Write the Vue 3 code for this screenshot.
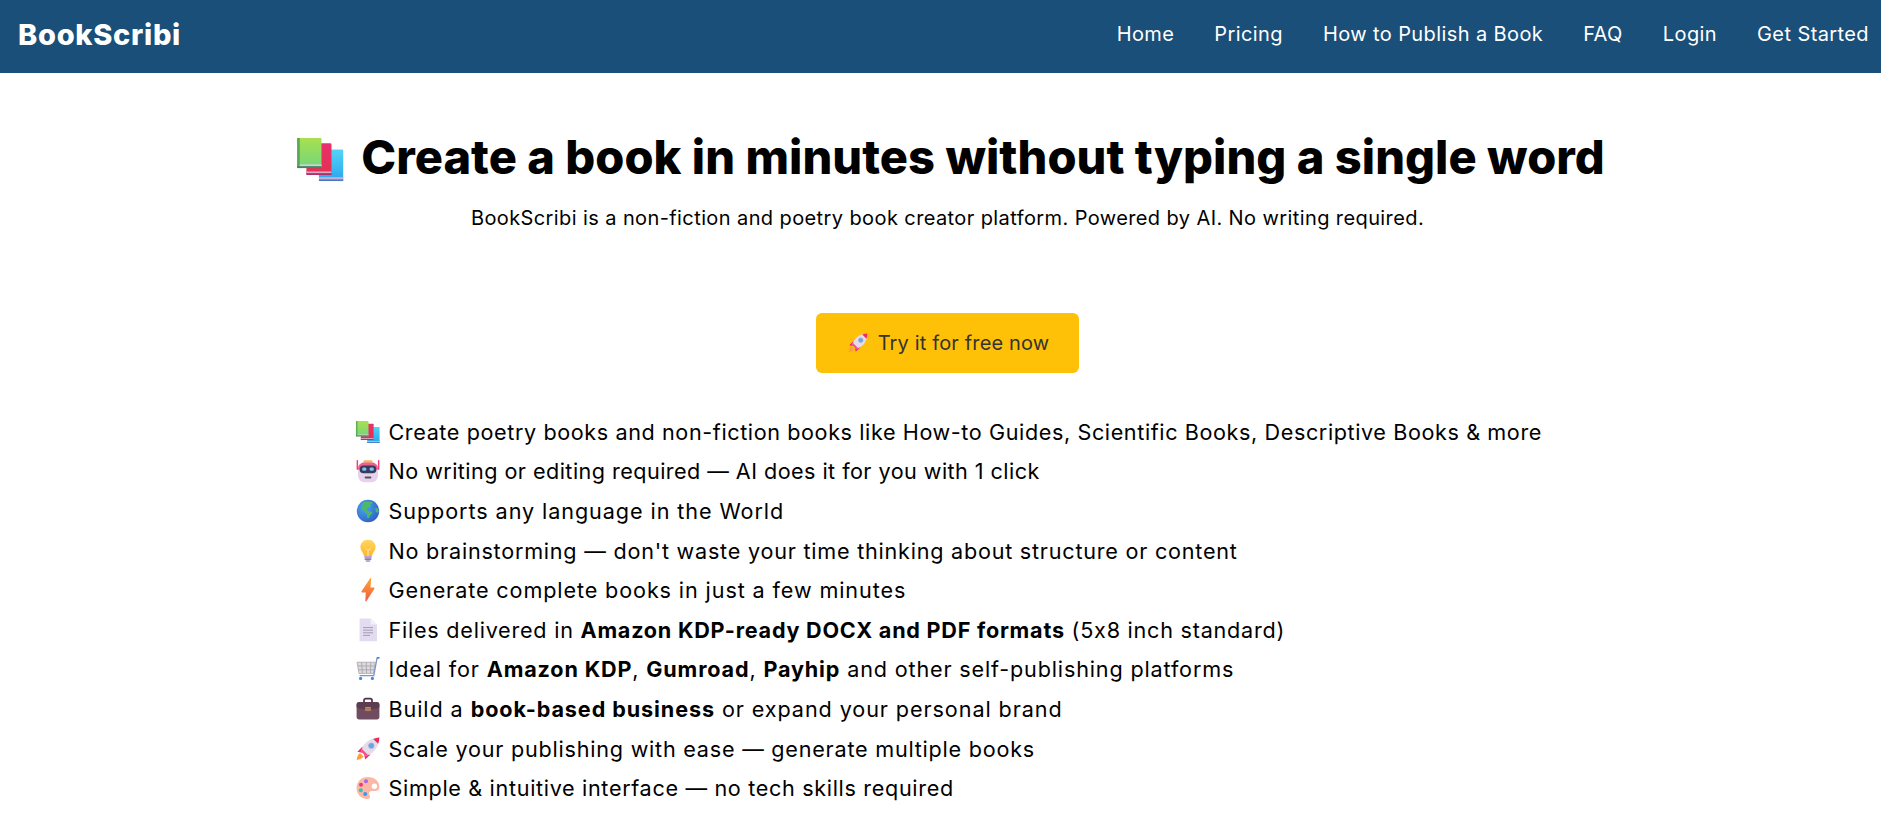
<script setup>
const links = ['Home', 'Pricing', 'How to Publish a Book', 'FAQ', 'Login', 'Get Started']
const rows = [
  { icon: 'books', ls: 0.6, parts: [['Create poetry books and non-fiction books like How-to Guides, Scientific Books, Descriptive Books & more', 0]] },
  { icon: 'robot', ls: 0.45, parts: [['No writing or editing required — AI does it for you with 1 click', 0]] },
  { icon: 'globe', ls: 0.92, parts: [['Supports any language in the World', 0]] },
  { icon: 'bulb', ls: 0.77, parts: [["No brainstorming — don't waste your time thinking about structure or content", 0]] },
  { icon: 'bolt', ls: 0.89, parts: [['Generate complete books in just a few minutes', 0]] },
  { icon: 'page', ls: 0.76, parts: [['Files delivered in ', 0], ['Amazon KDP-ready DOCX and PDF formats', 1], [' (5x8 inch standard)', 0]] },
  { icon: 'cart', ls: 0.84, parts: [['Ideal for ', 0], ['Amazon KDP', 1], [', ', 0], ['Gumroad', 1], [', ', 0], ['Payhip', 1], [' and other self-publishing platforms', 0]] },
  { icon: 'case', ls: 0.91, parts: [['Build a ', 0], ['book-based business', 1], [' or expand your personal brand', 0]] },
  { icon: 'rocket', ls: 0.77, parts: [['Scale your publishing with ease — generate multiple books', 0]] },
  { icon: 'palette', ls: 0.67, parts: [['Simple & intuitive interface — no tech skills required', 0]] }
]
</script>

<template>
  <div class="page">
    <svg class="defs" aria-hidden="true">
      <defs>
        <linearGradient id="gGreen" x1="0" y1="0" x2="0" y2="1"><stop offset="0" stop-color="#a8e04f"/><stop offset="1" stop-color="#74d67c"/></linearGradient>
        <linearGradient id="gRed" x1="0" y1="0" x2="0" y2="1"><stop offset="0" stop-color="#e8306e"/><stop offset="1" stop-color="#e6304f"/></linearGradient>
        <linearGradient id="gBlue" x1="0" y1="0" x2="0" y2="1"><stop offset="0" stop-color="#55d4f6"/><stop offset="1" stop-color="#2aa5ee"/></linearGradient>
        <linearGradient id="gBulb" x1="0" y1="0" x2="0" y2="1"><stop offset="0" stop-color="#ffd75e"/><stop offset="1" stop-color="#ffb52e"/></linearGradient>
        <linearGradient id="gBolt" x1="0" y1="0" x2="0" y2="1"><stop offset="0" stop-color="#ffa62e"/><stop offset="1" stop-color="#ee5a4a"/></linearGradient>
        <radialGradient id="gGlobe" cx=".35" cy=".35" r=".75"><stop offset="0" stop-color="#4aa8ef"/><stop offset="1" stop-color="#2c5fc0"/></radialGradient>
        <symbol id="books" viewBox="0 0 24 24">
          <rect x="11.200" y="6.900" width="12.400" height="16" rx=".6" fill="url(#gBlue)"/>
          <rect x="11.200" y="21" width="12.400" height="1.400" fill="#c4aedb"/>
          <rect x="11.200" y="22.200" width="12.400" height=".8" fill="#4b76c0"/>
          <rect x="4.800" y="3.700" width="12.800" height="16" rx=".6" fill="url(#gRed)"/>
          <rect x="4.800" y="18.100" width="12.800" height="1.100" fill="#d9a9c8"/>
          <rect x="4.800" y="19" width="12.800" height=".9" fill="#b02d68"/>
          <rect x=".1" y="1" width="12.400" height="15.200" rx=".7" fill="url(#gGreen)"/>
          <rect x=".1" y="1" width="1.300" height="15.200" fill="#56a84f"/>
          <rect x="1.400" y="14.500" width="11.100" height="1.100" fill="#d5cfdc"/>
          <rect x=".1" y="15.400" width="12.400" height="1" fill="#44806a"/>
        </symbol>
        <symbol id="robot" viewBox="0 0 24 24">
          <rect x=".6" y="1" width="1.500" height="10" rx=".7" fill="#f0447a"/>
          <rect x="21.900" y="1" width="1.500" height="10" rx=".7" fill="#f0447a"/>
          <rect x="7.500" y="1.200" width="9" height="3" rx="1.200" fill="#f2b84c"/>
          <rect x="2" y="3.600" width="20" height="19.600" rx="6.500" fill="#e6d2ea"/>
          <path d="M2 9.500C2 6 5 3.600 8 3.600h8c3 0 6 2.400 6 5.900v1H2z" fill="#f0608c"/>
          <rect x="3.600" y="6.600" width="16.800" height="7.600" rx="3.800" fill="#383a58"/>
          <rect x="6.200" y="8.600" width="4.200" height="3.200" rx="1.400" fill="#7ec0f8"/>
          <rect x="13.600" y="8.600" width="4.200" height="3.200" rx="1.400" fill="#7ec0f8"/>
          <rect x="8.600" y="17.400" width="6.800" height="2" rx=".8" fill="#5a4d68"/>
        </symbol>
        <symbol id="globe" viewBox="0 0 24 24">
          <circle cx="12" cy="12" r="11.200" fill="url(#gGlobe)"/>
          <path d="M7 3.400c2.600-1.200 7-1.400 9.800-.2l-.6 1.400-2 .6.8 1.600-1.400 1.800-2.400.4-.6 2 1.200 1.200 2.800.2 1.800 1-1.200 2.200-1.400 1-.2 1.600-1.600 1-1-1 .2-2.600-1.600-1.200-.4-2.200-2.400-1-1.200-2.600.8-1.400z" fill="#4eb86a"/>
          <path d="M19.400 8.800l2.600.8.8 3-1.400 1.400-1.800-1.400z" fill="#4eb86a"/>
        </symbol>
        <symbol id="bulb" viewBox="0 0 24 24">
          <path d="M12 .8c-4.600 0-7.600 3.300-7.600 7.300 0 3.800 2.900 5.400 3.600 9h8c.7-3.600 3.600-5.200 3.600-9 0-4-3-7.300-7.600-7.300z" fill="url(#gBulb)"/>
          <path d="M9.400 9.600l2.600 2 2.600-2M12 11.600v5.400" fill="none" stroke="#fff1c4" stroke-width=".9"/>
          <rect x="8.200" y="17" width="7.600" height="2.200" rx=".8" fill="#b7a1d0"/>
          <rect x="8.600" y="19.200" width="6.800" height="2" rx=".8" fill="#8e7cad"/>
          <rect x="9.800" y="21.200" width="4.400" height="1.800" rx=".9" fill="#b7a1d0"/>
        </symbol>
        <symbol id="bolt" viewBox="0 0 24 24">
          <path d="M14 .6 5.600 13.200c-.4.600 0 1.300.7 1.300h3.400L9.400 22.800c-.1.600.6.900 1 .4l8-12.400c.4-.6 0-1.300-.7-1.300h-3.200l.6-8.600c.1-.7-.8-1.200-1.100-.3z" fill="url(#gBolt)"/>
        </symbol>
        <symbol id="page" viewBox="0 0 24 24">
          <path d="M3.600 .4h11L21 6.600v16.600H3.600z" fill="#e3dbf0"/>
          <path d="M14.600.4 21 6.600h-6.400z" fill="#f4f0f8"/>
          <path d="M7 9.600h10M7 12.200h10M7 14.800h10M7 17.400h7" stroke="#a59cb5" stroke-width="1" fill="none"/>
        </symbol>
        <symbol id="cart" viewBox="0 0 24 24">
          <path d="M1 5.200h18.200l-1.600 11.200H3z" fill="#dcd9df" stroke="#a9a7ad" stroke-width=".8"/>
          <path d="M5.600 5.200l.8 11.200M10.200 5.200l.4 11.200M14.800 5.200l-.4 11.200M1.600 9h17M2.200 12.800h15.800" stroke="#a9a7ad" stroke-width=".9" fill="none"/>
          <path d="M23 .8l-2 .3-3.200 17.600H3.600" fill="none" stroke="#7d93c9" stroke-width="1.300"/>
          <path d="M21 .9l2.600-.4" stroke="#3f8ae0" stroke-width="1.600"/>
          <circle cx="4.600" cy="21.400" r="1.600" fill="#3f8ae0"/>
          <circle cx="16.400" cy="21.400" r="1.600" fill="#3f8ae0"/>
        </symbol>
        <symbol id="case" viewBox="0 0 24 24">
          <path d="M8 6V3.400C8 2.400 8.800 1.700 9.800 1.700h4.400c1 0 1.800.7 1.800 1.700V6" fill="none" stroke="#4b3346" stroke-width="1.700"/>
          <rect x=".6" y="5" width="22.800" height="17.400" rx="2.600" fill="#704c60"/>
          <path d="M.6 7.600C.6 6.200 1.800 5 3.200 5h17.600c1.400 0 2.600 1.200 2.600 2.600v2.600C18 13 6 13 .6 10.200z" fill="#5d3d50"/>
          <rect x="9" y="10" width="6" height="3.800" rx=".6" fill="#c98a60"/>
          <path d="M9 11.800h6" stroke="#8d5a48" stroke-width=".7"/>
        </symbol>
        <symbol id="rocket" viewBox="0 0 24 24">
          <path d="M4 16c-1.800 1.300-3 3.800-3.400 7 3.200-.3 5.700-1.600 7-3.400z" fill="#ff9c3c"/>
          <path d="M6.500 9.500 1.400 14.800l5.800 1.200z" fill="#ef2e72"/>
          <path d="M14.500 17.500l-5.300 5.100-1.200-5.800z" fill="#ef2e72"/>
          <path d="M23.400.6C17 .8 10.500 3.600 7.400 9L4.800 14.200l5 5 5.200-2.600C20.400 13.500 23.200 7 23.400.6z" fill="#e6dbe8"/>
          <path d="M17.200 1.900c2-.8 4.100-1.200 6.200-1.300-.1 2.100-.5 4.200-1.300 6.200z" fill="#f0285e"/>
          <path d="M6 12l6 6-2.200 1.200-5-5z" fill="#f0508c"/>
          <circle cx="15.300" cy="8.700" r="2.700" fill="#5fa8f0" stroke="#a9a3c4" stroke-width=".8"/>
        </symbol>
        <symbol id="palette" viewBox="0 0 24 24">
          <path d="M12 1C5.400 1 .6 5.600.6 12s4.800 11 10.800 11c1.600 0 2.600-1 2.600-2.300 0-1.500-1-2-1-3.300 0-1.400 1.200-2.300 2.800-2.300h3.400c2.400 0 4.200-1.400 4.200-4C23.400 5 18.200 1 12 1z" fill="#fbb8a4"/>
          <circle cx="18.400" cy="10.200" r="2.700" fill="#fff"/>
          <circle cx="10" cy="5.200" r="2" fill="#a965e8"/>
          <circle cx="5" cy="8.800" r="2" fill="#f0387e"/>
          <circle cx="4.800" cy="14.200" r="2" fill="#36c4b4"/>
          <circle cx="9.200" cy="18" r="2" fill="#4a90ee"/>
        </symbol>
      </defs>
    </svg>

    <header class="topbar">
      <span class="logo">BookScribi</span>
      <nav class="nav">
        <a v-for="l in links" :key="l" class="nav-link">{{ l }}</a>
      </nav>
    </header>

    <main class="main">
      <h1 class="title">
        <svg class="title-icon"><use href="#books"/></svg>
        <span>Create a book in minutes without typing a single word</span>
      </h1>
      <p class="sub">BookScribi is a non-fiction and poetry book creator platform. Powered by AI. No writing required.</p>
      <a class="cta">
        <svg class="cta-icon"><use href="#rocket"/></svg>
        <span>Try it for free now</span>
      </a>
      <ul class="list">
        <li v-for="r in rows" :key="r.icon" class="row" :style="{ letterSpacing: r.ls + 'px' }">
          <svg class="row-icon"><use :href="'#' + r.icon"/></svg>
          <span class="row-text"><template v-for="(p, i) in r.parts" :key="i"><b v-if="p[1]">{{ p[0] }}</b><template v-else>{{ p[0] }}</template></template></span>
        </li>
      </ul>
    </main>
  </div>
</template>

<style scoped>
.page {
  font-family: Inter, "Noto Sans", sans-serif;
  font-feature-settings: "calt" 0;
  color: #000;
  background: #fff;
  min-height: 835px;
  overflow: hidden;
}
.defs { position: absolute; width: 0; height: 0; }
.topbar {
  height: 73px;
  background: #1a4f79;
  display: flex;
  align-items: center;
  justify-content: space-between;
  padding: 0 12px 0 18px;
  color: #fff;
}
.logo { font-size: 29px; font-weight: 800; letter-spacing: .7px; padding-bottom: 5px; }
.nav { display: flex; gap: 40px; padding-bottom: 6px; }
.nav-link { font-size: 20px; font-weight: 400; letter-spacing: .4px; color: #fff; }
.main {
  display: flex;
  flex-direction: column;
  align-items: center;
  padding: 54px 0 0 14px;
}
.title {
  display: flex;
  align-items: center;
  gap: 17px;
  margin: 0;
  padding-left: 7px;
  font-size: 47px;
  line-height: 60px;
  font-weight: 800;
  letter-spacing: .05px;
}
.title-icon { width: 47px; height: 47px; margin-top: 5px; }
.sub { margin: 17px 0 0; font-size: 20px; line-height: 28px; letter-spacing: .4px; }
.cta {
  margin-top: 81px;
  width: 263px;
  height: 60px;
  padding-left: 2px;
  box-sizing: border-box;
  background: #ffc107;
  border-radius: 6px;
  color: #333;
  font-size: 20px;
  letter-spacing: .15px;
  display: flex;
  align-items: center;
  justify-content: center;
  gap: 10px;
}
.cta-icon { width: 20px; height: 20px; }
.list {
  list-style: none;
  margin: 39px 0 0;
  padding: 0;
  width: 1184px;
}
.row {
  display: flex;
  align-items: center;
  gap: 9px;
  height: 39.6px;
  font-size: 21.6px;
  white-space: nowrap;
}
.row-icon { width: 24px; height: 24px; flex: none; }
.row-text b { font-weight: 700; }
</style>
